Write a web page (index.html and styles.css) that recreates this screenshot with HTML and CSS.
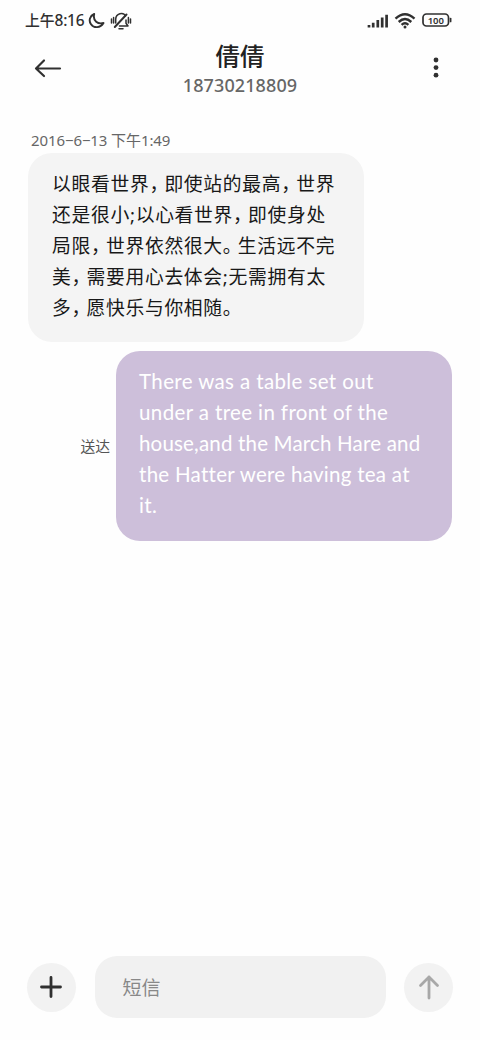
FILE: index.html
```html
<!DOCTYPE html>
<html lang="zh-CN">
<head>
<meta charset="utf-8">
<title>短信</title>
<link rel="stylesheet" href="styles.css">
</head>
<body>
<div class="screen">
  <div class="status">
    <span class="clock">上午<span class="digits">8:16</span></span>
    <svg class="moon" width="18" height="18" viewBox="0 0 18 18"><path d="M6.200 2C1.800 3.800 .4 8.600 3 12.200c2.900 4.200 9.400 4 12.500-1.200C10 12.500 4.500 9 6.200 2Z"/></svg>
    <svg class="bell" width="22" height="18" viewBox="0 0 22 18"><path d="M5.700 11V7.500C5.700 1 13.500-.2 15.500 4M16 8v3.200l2 2.800H9.500"/><path class="slash" d="M4.800 15 16.500 2.500"/><path d="M9 16.800h4M1.500 7v4M3.600 5.500v5.500M18.400 5.500v5.500M20.500 7v4"/></svg>
    <span class="spacer"></span>
    <svg class="signal" width="22" height="14" viewBox="0 0 22 14"><path d="M2 13.500v-2.500M6.200 13.500V8.700M10.800 13.500V6M15.200 13.500V3.500M19.600 13.500V.8"/></svg>
    <svg class="wifi" width="22" height="16" viewBox="0 0 22 16"><path d="M1.500 5.700Q11-3 20.500 5.700M4.700 9Q11 3.200 17.300 9M7.600 11.900Q11 8.800 14.400 11.900"/><circle cx="11" cy="14" r="1.500"/></svg>
    <svg class="battery" width="30" height="14" viewBox="0 0 30 14"><rect x="1" y="1" width="25.500" height="12" rx="3.500"/><path d="M28.600 5.500v3"/><text x="13.800" y="10.700" text-anchor="middle">100</text></svg>
  </div>
  <header class="header">
    <svg class="back" width="28" height="20" viewBox="0 0 28 20"><path d="M26 10.500H2M10 2.500l-8 8 8 7.500"/></svg>
    <div class="contact">
      <h1 class="name">倩倩</h1>
      <div class="phone">18730218809</div>
    </div>
    <svg class="more" width="8" height="22" viewBox="0 0 8 22"><circle cx="4" cy="3" r="2.400"/><circle cx="4" cy="10.600" r="2.400"/><circle cx="4" cy="18.200" r="2.400"/></svg>
  </header>
  <main class="thread">
    <div class="date">2016−6−13 下午1:49</div>
    <div class="bubble received">
      以眼看世界<i>，</i>即使站的最高<i>，</i>世界<br>
      还是很小;以心看世界<i>，</i>即使身处<br>
      局限<i>，</i>世界依然很大<i>。</i>生活远不完<br>
      美<i>，</i>需要用心去体会;无需拥有太<br>
      多<i>，</i>愿快乐与你相随<i>。</i>
    </div>
    <div class="sent-row">
      <span class="delivered">送达</span>
      <div class="bubble sent">
        <span class="wide">There was a table set out</span><br>
        <span class="wide">under a tree in front of the</span><br>
        <span class="snug">house,and the March Hare and</span><br>
        <span class="medium">the Hatter were having tea at</span><br>
        <span class="wide">it.</span>
      </div>
    </div>
  </main>
  <footer class="composer">
    <div class="round"><svg class="plus" width="24" height="24" viewBox="0 0 24 24"><path d="M12 2.500v19M2.500 12h19"/></svg></div>
    <div class="field">短信</div>
    <div class="round"><svg class="up" width="24" height="28" viewBox="0 0 24 28"><path d="M12 25V4M3.500 12.500 12 4l8.500 8.500"/></svg></div>
  </footer>
</div>
</body>
</html>
```
FILE: styles.css
```css
* { box-sizing: border-box; }
body { margin: 0; background: #fefefe; font-family: "Noto Sans", "Noto Sans CJK SC", sans-serif; color: #222; }
svg { display: block; flex: none; fill: none; stroke: #303030; stroke-linecap: round; stroke-linejoin: round; }
.screen { width: 480px; height: 1040px; display: flex; flex-direction: column; overflow: hidden; }
.status { height: 40px; padding: 0 28px 0 25px; display: flex; align-items: center; }
.clock { font-size: 14.800px; line-height: 22px; white-space: nowrap; width: 61px; color: #303030; font-weight: 500; }
.digits { font-size: 15.500px; letter-spacing: -.3px; }
.moon { margin: 1px 0 0 2px; stroke-width: 1.900; }
.bell { margin: 1px 0 0 4px; stroke-width: 1.500; }
.slash { stroke-width: 2; }
.spacer { flex: 1; }
.signal { margin-top: 1px; stroke-width: 2.700; stroke-linecap: butt; }
.wifi { margin: 1px 0 0 5px; stroke-width: 2.400; stroke-linecap: butt; }
.wifi circle { fill: #303030; stroke: none; }
.battery { margin-left: 6px; stroke-width: 1.700; }
.battery text { font: 600 9.500px "Noto Sans", sans-serif; fill: #303030; stroke: none; }
.header { height: 82px; padding: 0 40px 0 34px; display: flex; justify-content: space-between; }
.back { margin-top: 18px; stroke-width: 2.200; }
.more { margin-top: 17px; }
.more circle { fill: #303030; stroke: none; }
.contact { text-align: center; margin-right: 14px; }
.name { margin: 0; padding-top: 1px; font-size: 24.500px; line-height: 32px; font-weight: 500; color: #222; }
.phone { font-size: 18px; line-height: 24px; font-weight: 500; color: #666; letter-spacing: .1px; }
.thread { flex: 1; padding: 6px 28px 0; }
.date { height: 25px; padding-left: 3px; font-size: 15px; line-height: 24px; letter-spacing: -.1px; color: #666; white-space: nowrap; }
.bubble { width: 336px; border-radius: 24px; white-space: nowrap; line-height: 31.100px; }
.received { height: 189px; padding: 16px 24px; background: #f4f4f4; color: #181818; font-size: 18.800px; letter-spacing: .7px; }
.received i { font-style: normal; letter-spacing: -3.800px; }
.sent-row { margin-top: 9px; display: flex; align-items: center; justify-content: flex-end; gap: 6px; }
.delivered { font-size: 14.800px; line-height: 24px; color: #555; }
.sent { height: 190px; padding: 15px 23px; background: #cdbfda; color: #fff; font-family: Lato, sans-serif; font-size: 20.500px; }
.wide { letter-spacing: .38px; }
.medium { letter-spacing: .28px; }
.snug { letter-spacing: .18px; }
.composer { height: 84px; padding: 0 27px; display: flex; justify-content: space-between; align-items: flex-start; }
.round { width: 49px; height: 49px; margin-top: 7px; border-radius: 50%; background: #f2f2f2; display: flex; align-items: center; justify-content: center; }
.plus { margin: 0 1px 1px 0; stroke-width: 2.800; }
.up { margin-bottom: 1px; stroke: #a8a8a8; stroke-width: 2.800; }
.field { width: 291px; height: 62px; border-radius: 22px; background: #f1f1f1; padding-left: 28px; font-size: 19px; line-height: 64px; color: #888; }
```
